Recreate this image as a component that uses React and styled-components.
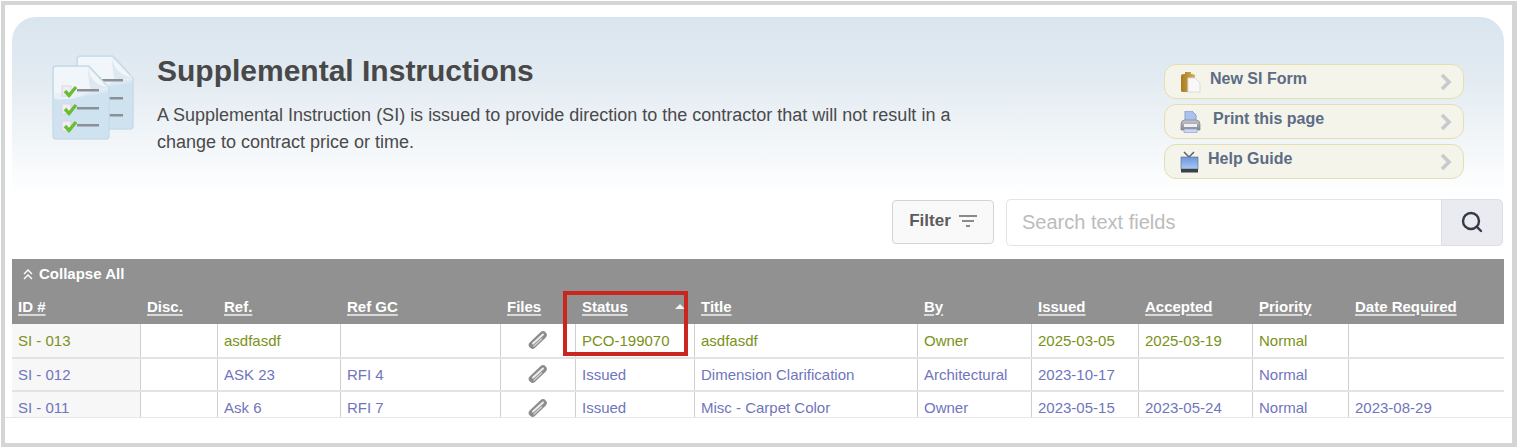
import React from "react";
import styled, { createGlobalStyle } from "styled-components";
import { Search } from "lucide-react";

const GlobalStyle = createGlobalStyle`
  html, body {
    margin: 0;
    padding: 0;
    background: #fff;
    font-family: "Liberation Sans", Arial, sans-serif;
  }
  * { box-sizing: border-box; }
`;

const Frame = styled.div`
  position: relative;
  width: 1516px;
  height: 446px;
  margin: 1px 0 0 1px;
  overflow: hidden;
  border: 4px solid #d3d5d6;
  border-right-width: 5px;
  padding: 12px 8px 0 7px;
  background: #fff;
`;

const Hero = styled.header`
  display: flex;
  height: 178px;
  padding: 38px 40px 0 40px;
  border-radius: 24px 24px 0 0;
  background: linear-gradient(180deg, #d9e5ee 0%, #e3ebf2 35%, #f6f9fb 80%, #ffffff 100%);
`;

const HeroIcon = styled.svg`
  flex: none;
  width: 84px;
  height: 88px;
`;

const HeroText = styled.div`
  flex: none;
  width: 812px;
  margin-left: 21px;
`;

const Title = styled.h1`
  margin: -2px 0 0;
  font-size: 30px;
  line-height: 36px;
  font-weight: 700;
  color: #484848;
`;

const Intro = styled.p`
  margin: 13px 0 0;
  font-size: 18px;
  line-height: 27px;
  color: #4a4a4a;
`;

const ActionList = styled.nav`
  display: flex;
  flex-direction: column;
  gap: 5px;
  width: 300px;
  margin: 9px 0 0 auto;
`;

const Action = styled.a`
  display: flex;
  align-items: center;
  height: 35px;
  padding: 0 11px 0 15px;
  background: #f4f4eb;
  border: 1.5px solid #e3dfaf;
  border-radius: 12px;
  font-size: 16px;
  font-weight: 700;
  color: #5d6c85;
`;

const ActionIcon = styled.svg`
  flex: none;
  width: 21px;
  height: 22px;
`;

const ActionLabel = styled.span`
  flex: 1;
  margin-top: -5px;
  margin-left: ${(p) => p.$offset}px;
`;

const Toolbar = styled.div`
  display: flex;
  align-items: center;
  height: 64px;
  padding: 0 1px 10px 880px;
`;

const FilterButton = styled.button`
  display: flex;
  align-items: center;
  justify-content: center;
  gap: 8px;
  width: 102px;
  height: 44px;
  margin-right: 12px;
  padding: 0 0 2px;
  background: #f9f9f9;
  border: 1px solid #d4d4d4;
  border-radius: 4px;
  font: 700 17px "Liberation Sans", Arial, sans-serif;
  color: #5c5c5c;
`;

const SearchBox = styled.div`
  flex: 1;
  height: 47px;
  padding: 0 15px;
  display: flex;
  align-items: center;
  background: #fff;
  border: 1.5px solid #e2e4ea;
  border-right: 0;
  border-radius: 5px 0 0 5px;
  font-size: 20px;
  color: #bcbcbc;
`;

const SearchButton = styled.button`
  flex: none;
  display: flex;
  align-items: center;
  justify-content: center;
  width: 62px;
  height: 47px;
  padding: 0;
  background: #e9ebf0;
  border: 1.5px solid #dcdfe6;
  border-radius: 0 5px 5px 0;
  color: #343b47;
`;

const TableClip = styled.div`
  height: 158px;
  overflow: hidden;
`;

const FooterRule = styled.div`
  height: 1px;
  margin: 0 -8px 0 -7px;
  background: #e7e7e7;
`;

const CollapseBar = styled.div`
  display: flex;
  align-items: center;
  gap: 5px;
  height: 36px;
  padding: 0 0 7px 10px;
  background: #919191;
  font-size: 15px;
  font-weight: 700;
  color: #fff;
`;

const Table = styled.table`
  width: 1492px;
  table-layout: fixed;
  border-collapse: collapse;
  font-size: 15px;
`;

const HeadCell = styled.th`
  position: relative;
  height: 29px;
  padding: 0 7px 6px;
  background: #919191;
  text-align: left;
  vertical-align: middle;
  font-size: 15px;
  font-weight: 700;
  color: #fff;

  &:first-child {
    padding-left: 6px;
  }
`;

const HeadLabel = styled.span`
  text-decoration: underline;
  text-decoration-color: #d8d8d8;
  text-decoration-thickness: 2px;
  text-underline-offset: 2px;
`;

const SortArrow = styled.i`
  position: absolute;
  right: 9px;
  top: 9px;
  width: 0;
  height: 0;
  border-left: 5px solid transparent;
  border-right: 5px solid transparent;
  border-bottom: 5px solid #f2f2f2;
`;

const Row = styled.tr`
  height: 33.5px;
  color: ${(p) => (p.$draft ? "#7a9119" : "#7075bd")};
  border-bottom: 2px solid #e3e3e3;
`;

const Cell = styled.td`
  padding: 0 6px 0 6.5px;
  border-left: 1px solid #cfcfcf;
  background: ${(p) => (p.$shaded ? "#f7f7f7" : "#fff")};
  white-space: nowrap;

  &:first-child {
    border-left: 0;
    padding-left: 6px;
  }
`;

const Clip = styled.svg`
  display: block;
  width: 20px;
  height: 20px;
  margin: 0 auto;
`;

const Highlight = styled.div`
  position: absolute;
  left: 558px;
  top: 286px;
  width: 125px;
  height: 65px;
  border: 4px solid #c9261f;
`;

const columns = [
  { label: "ID #", width: 128 },
  { label: "Disc.", width: 77 },
  { label: "Ref.", width: 123 },
  { label: "Ref GC", width: 160 },
  { label: "Files", width: 75 },
  { label: "Status", width: 119, sorted: true },
  { label: "Title", width: 223 },
  { label: "By", width: 114 },
  { label: "Issued", width: 107 },
  { label: "Accepted", width: 114 },
  { label: "Priority", width: 96 },
  { label: "Date Required", width: 156 },
];

const rows = [
  ["SI - 013", "", "asdfasdf", "", "PCO-199070", "asdfasdf", "Owner", "2025-03-05", "2025-03-19", "Normal", ""],
  ["SI - 012", "", "ASK 23", "RFI 4", "Issued", "Dimension Clarification", "Architectural", "2023-10-17", "", "Normal", ""],
  ["SI - 011", "", "Ask 6", "RFI 7", "Issued", "Misc - Carpet Color", "Owner", "2023-05-15", "2023-05-24", "Normal", "2023-08-29"],
];

const ChecklistPage = ({ x, y }) => (
  <g transform={`translate(${x} ${y})`}>
    <path d="M3 0h33l20 22v48a3 3 0 0 1-3 3H3a3 3 0 0 1-3-3V3a3 3 0 0 1 3-3z" fill="#cfe2f0" stroke="#c9dbe8" strokeWidth="1.500" />
    <path d="M3 1h32l20 21v1q-20 2-27 7-10 4-27 3V3a2 2 0 0 1 2-2z" fill="#f1f6fb" />
    <path d="M1 27q30 1 54-8v7q-28 6-54 7z" fill="#e4edf5" opacity=".6" />
    <path d="M35 0q1 17 20 22q-12 1-17 4-3-12-3-26z" fill="#dfe8f0" />
    {[22, 40, 57].map((top) => (
      <g key={top}>
        <rect x="9" y={top - 2} width="9" height="10" fill="#f3ecf5" stroke="#ded2e4" />
        <path d={`M12 ${top + 3}l4 4.500 7-8.500`} fill="none" stroke="#68bd30" strokeWidth="3.400" />
        <rect x="24" y={top + 1} width="22" height="2.500" fill="#8a9096" />
      </g>
    ))}
  </g>
);

const App = () => (
  <>
    <GlobalStyle />
    <Frame>
      <Hero>
        <HeroIcon viewBox="0 0 84 88">
          <ChecklistPage x={25} y={1} />
          <ChecklistPage x={1} y={11} />
        </HeroIcon>
        <HeroText>
          <Title>Supplemental Instructions</Title>
          <Intro>
            A Supplemental Instruction (SI) is issued to provide direction to the contractor that will not result in a
            change to contract price or time.
          </Intro>
        </HeroText>
        <ActionList>
          <Action>
            <ActionIcon viewBox="0 0 21 22">
              <defs>
                <linearGradient id="gold" x1="0" x2="1" y1="0" y2="0">
                  <stop offset="0" stopColor="#a87c22" />
                  <stop offset="1" stopColor="#d4ad5c" />
                </linearGradient>
              </defs>
              <path d="M1 5q0-2 3-2h1V1h6v2h1q3 0 3 2v15q0 1-2 1H3q-2 0-2-1z" fill="url(#gold)" />
              <path d="M8 7h7l5 5v9H8z" fill="#f8f8f6" stroke="#dcdcd8" />
            </ActionIcon>
            <ActionLabel $offset={9}>New SI Form</ActionLabel>
            <Chevron />
          </Action>
          <Action>
            <ActionIcon viewBox="0 0 21 22">
              <defs>
                <linearGradient id="metal" x1="0" x2="0" y1="0" y2="1">
                  <stop offset="0" stopColor="#c4c7cc" />
                  <stop offset="1" stopColor="#83878e" />
                </linearGradient>
              </defs>
              <path d="M5 0h7l4 4v7H5z" fill="#aac2ee" stroke="#86a0d6" />
              <path d="M1 13q0-4 4-4h11q4 0 4 4v6H1z" fill="url(#metal)" stroke="#80848b" strokeWidth=".7" />
              <rect x="4" y="13" width="13" height="3" fill="#eef0f3" />
              <rect x="4" y="18" width="13" height="3.500" fill="#cdd7ee" stroke="#8fa3cf" strokeWidth=".7" />
            </ActionIcon>
            <ActionLabel $offset={12}>Print this page</ActionLabel>
            <Chevron />
          </Action>
          <Action>
            <ActionIcon viewBox="0 0 21 22">
              <defs>
                <linearGradient id="screen" x1="0" x2="0" y1="0" y2="1">
                  <stop offset="0" stopColor="#6d96dc" />
                  <stop offset="1" stopColor="#a8c8f4" />
                </linearGradient>
              </defs>
              <path d="M4 1l5 5 5-5" fill="none" stroke="#59616d" strokeWidth="1.500" />
              <rect x="1" y="6" width="17" height="12" fill="url(#screen)" stroke="#5a6678" strokeWidth=".6" />
              <rect x="1" y="18" width="17" height="3.500" fill="#3b3f46" />
            </ActionIcon>
            <ActionLabel $offset={7}>Help Guide</ActionLabel>
            <Chevron />
          </Action>
        </ActionList>
      </Hero>
      <Toolbar>
        <FilterButton>
          Filter
          <svg width="18" height="14" viewBox="0 0 18 14">
            <path d="M0 2h18M3 7h12M7 12h4" stroke="#666" strokeWidth="1.600" />
          </svg>
        </FilterButton>
        <SearchBox>Search text fields</SearchBox>
        <SearchButton>
          <Search size={24} strokeWidth={2.400} />
        </SearchButton>
      </Toolbar>
      <TableClip>
        <CollapseBar>
          <svg width="12" height="12" viewBox="0 0 12 12">
            <path d="M2 6l4-4 4 4M2 11l4-4 4 4" fill="none" stroke="#fff" strokeWidth="1.400" />
          </svg>
          Collapse All
        </CollapseBar>
        <Table>
          <colgroup>
            {columns.map((col) => (
              <col key={col.label} style={{ width: col.width }} />
            ))}
          </colgroup>
          <thead>
            <tr>
              {columns.map((col) => (
                <HeadCell key={col.label}>
                  <HeadLabel>{col.label}</HeadLabel>
                  {col.sorted && <SortArrow />}
                </HeadCell>
              ))}
            </tr>
          </thead>
          <tbody>
            {rows.map((row, index) => (
              <Row key={row[0]} $draft={index === 0}>
                <Cell $shaded>{row[0]}</Cell>
                <Cell>{row[1]}</Cell>
                <Cell>{row[2]}</Cell>
                <Cell>{row[3]}</Cell>
                <Cell>
                  <Clip viewBox="0 0 20 20">
                    <path d="M4.500 15L15 5" fill="none" stroke="#8c8c8c" strokeWidth="7.500" strokeLinecap="round" />
                    <path d="M5 13.500L15 4.500" fill="none" stroke="#ececec" strokeWidth="2" strokeLinecap="round" />
                    <path d="M6 16L13.500 9" fill="none" stroke="#cfcfcf" strokeWidth="1.500" strokeLinecap="round" />
                  </Clip>
                </Cell>
                {row.slice(4).map((value, i) => (
                  <Cell key={i}>{value}</Cell>
                ))}
              </Row>
            ))}
          </tbody>
        </Table>
      </TableClip>
      <FooterRule />
      <Highlight />
    </Frame>
  </>
);

function Chevron() {
  return (
    <svg width="12" height="18" viewBox="0 0 12 18">
      <path d="M2 2l7 7-7 7" fill="none" stroke="#c6cacb" strokeWidth="3.500" />
    </svg>
  );
}

export default App;
